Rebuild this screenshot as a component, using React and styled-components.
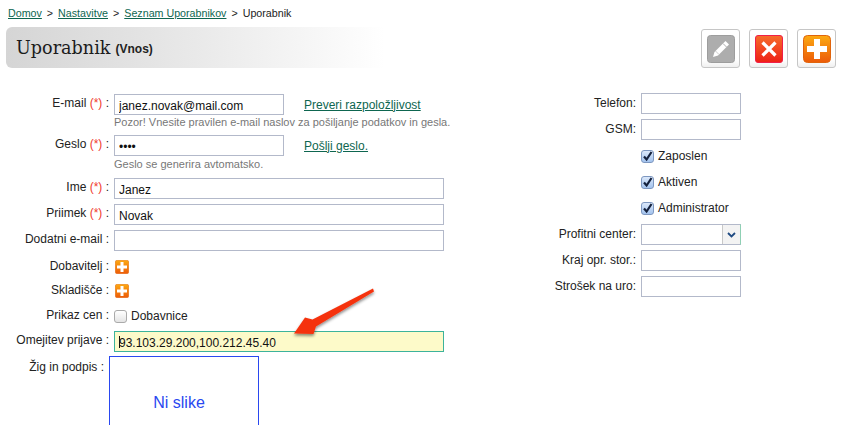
import React from 'react';
import styled, { createGlobalStyle } from 'styled-components';

const GlobalStyle = createGlobalStyle`
  html, body {
    margin: 0;
    padding: 0;
    height: 425px;
    overflow: hidden;
    background: #fff;
  }
  body {
    font-family: "Liberation Sans", Arial, sans-serif;
    font-size: 12px;
    color: #222;
  }
`;

const Page = styled.div`
  position: relative;
  width: 842px;
  height: 425px;
  overflow: hidden;
  padding: 7px 6px 0;
  box-sizing: border-box;
`;

const Breadcrumbs = styled.div`
  display: flex;
  gap: 5px;
  padding-left: 2px;
  font-size: 10.7px;
  line-height: 13px;
  height: 20px;
  color: #222;
`;

const Crumb = styled.a`
  color: #0e6650;
  text-decoration: underline;
`;

const Header = styled.div`
  display: flex;
  justify-content: space-between;
  align-items: flex-start;
  height: 41px;
  margin-bottom: 26px;
`;

const TitleBar = styled.div`
  width: 379px;
  height: 41px;
  display: flex;
  align-items: center;
  gap: 5px;
  padding-left: 10px;
  box-sizing: border-box;
  border-radius: 6px 0 0 6px;
  background: linear-gradient(90deg, #d5d5d5 0%, #e9e9e9 50%, #ffffff 100%);
`;

const Title = styled.h1`
  margin: 0;
  font-family: "DejaVu Serif", "Liberation Serif", serif;
  font-size: 17.6px;
  font-weight: 400;
  color: #1c1c1c;
`;

const TitleNote = styled.span`
  font-size: 12px;
  font-weight: 700;
  margin-top: 2px;
`;

const Actions = styled.div`
  display: flex;
  gap: 9px;
  margin-top: 2px;
`;

const ActionButton = styled.button`
  width: 39px;
  height: 39px;
  padding: 0;
  display: flex;
  align-items: center;
  justify-content: center;
  background: linear-gradient(#fff 80%, #f0f0f0);
  border: 1px solid #c6c6c6;
  border-radius: 3px;
`;

const Columns = styled.div`
  display: flex;
`;

const LeftColumn = styled.div`
  width: 438px;
  display: flex;
  flex-direction: column;
`;

const RightColumn = styled.div`
  margin-left: 95px;
  margin-top: -1px;
  display: flex;
  flex-direction: column;
`;

const Field = styled.div`
  display: grid;
  grid-template-columns: 103px 1fr;
  column-gap: 5px;
  align-items: start;
  min-height: ${p => p.$height || 21}px;
  margin-bottom: ${p => p.$gap ?? 5}px;
`;

const Label = styled.label`
  text-align: right;
  line-height: 18px;
  white-space: nowrap;
  font-size: 12px;
  color: #222;
`;

const ImageLabel = styled(Label)`
  padding: 2px 5px 0 0;
`;

const Required = styled.span`
  color: #f03a2e;
`;

const TextInput = styled.input`
  width: ${p => p.$width || 330}px;
  height: 21px;
  box-sizing: border-box;
  padding: 2px 4px 0;
  border: 1px solid ${p => (p.$focused ? '#3cb39b' : '#b3b9ca')};
  background: ${p => (p.$focused ? '#fdfac9' : '#fff')};
  font-family: "Liberation Sans", Arial, sans-serif;
  font-size: 12px;
  color: #111;
  outline: none;
  display: block;
`;

const InputRow = styled.div`
  display: flex;
  align-items: center;
  gap: 20px;
`;

const SideLink = styled.a`
  color: #0e6650;
  text-decoration: underline;
  font-size: 12px;
`;

const Hint = styled.div`
  font-size: 11px;
  line-height: 13px;
  color: #777;
  margin-top: ${p => p.$top ?? 2}px;
  white-space: nowrap;
`;

const IconRow = styled.div`
  height: 19px;
  display: flex;
  align-items: center;
  margin-left: 1px;
`;

const CheckRow = styled.div`
  display: flex;
  align-items: center;
  gap: 4px;
  height: 20px;
`;

const EmptyBox = styled.span`
  width: 11px;
  height: 11px;
  border: 1px solid #aaa;
  border-radius: 3px;
  background: linear-gradient(#fff, #e4e4e4);
  display: block;
`;

const CheckedBox = styled.span`
  width: 13px;
  height: 13px;
  box-sizing: border-box;
  border: 1px solid #7d97c0;
  border-radius: 3px;
  background: linear-gradient(#dbe8fa, #a3c3ee);
  display: flex;
  align-items: center;
  justify-content: center;
`;

const CaretWrap = styled.div`
  position: relative;
  width: 330px;
`;

const Caret = styled.span`
  position: absolute;
  left: 5px;
  top: 5px;
  width: 1px;
  height: 12px;
  background: #111;
`;

const ImageBox = styled.div`
  width: 150px;
  height: 150px;
  box-sizing: border-box;
  margin-left: -5px;
  border: 1px solid #2a48f0;
  color: #2a48f0;
  font-size: 16px;
  text-align: center;
  padding: 37px 10px 0 0;
`;

const SideField = styled.div`
  display: grid;
  grid-template-columns: 97px 100px;
  column-gap: 5px;
  align-items: start;
  height: 21px;
  margin-bottom: 5px;
`;

const SideLabel = styled(Label)`
  line-height: 16px;
  padding-top: 2px;
`;

const SideCheck = styled.div`
  display: flex;
  align-items: center;
  gap: 4px;
  height: 20px;
  margin-bottom: 6px;
  margin-left: 102px;
  margin-top: ${p => p.$top || 0}px;
`;

const SelectBox = styled.div`
  width: 100px;
  height: 21px;
  box-sizing: border-box;
  border: 1px solid #b3b9ca;
  border-right-color: #8fd0b4;
  display: flex;
  justify-content: flex-end;
`;

const SelectArrow = styled.div`
  width: 17px;
  background: #f3f3f3;
  border-left: 1px solid #c8c8c8;
  display: flex;
  align-items: center;
  justify-content: center;
`;

const Annotation = styled.svg`
  position: absolute;
  left: 0;
  top: 0;
  pointer-events: none;
  overflow: visible;
`;

const PencilIcon = () => (
  <svg width="28" height="28" viewBox="0 0 28 28">
    <rect x="0.5" y="0.5" width="27" height="27" rx="3" fill="#adadad" stroke="#9d9d9d" />
    <path d="M18.5 6l3.5 3.5L11 20.5 6 22l1.5-5z" fill="#fff" />
    <path d="M16 8.5l3.5 3.5" stroke="#adadad" strokeWidth="1" fill="none" />
    <path d="M8.5 16l3.5 3.5" stroke="#bdbdbd" strokeWidth="0.8" fill="none" />
  </svg>
);

const CloseIcon = () => (
  <svg width="28" height="28" viewBox="0 0 28 28">
    <defs>
      <linearGradient id="closeFill" x1="0" y1="0" x2="0" y2="1">
        <stop offset="0" stopColor="#f66c2a" />
        <stop offset="1" stopColor="#ee1f16" />
      </linearGradient>
    </defs>
    <rect x="0.5" y="0.5" width="27" height="27" rx="2.5" fill="url(#closeFill)" stroke="#f01f48" />
    <path d="M7.5 7.5l13 13M20.5 7.5l-13 13" stroke="#fff" strokeWidth="3.2" />
  </svg>
);

const PlusIcon = ({ id, size = 28 }) => (
  <svg width={size} height={size} viewBox="0 0 28 28">
    <defs>
      <linearGradient id={id} x1="0" y1="0" x2="0" y2="1">
        <stop offset="0" stopColor="#fcaa12" />
        <stop offset="1" stopColor="#ec5a08" />
      </linearGradient>
    </defs>
    <rect x="0.5" y="0.5" width="27" height="27" rx="4" fill={`url(#${id})`} stroke="#e0640c" />
    <path d="M11 4h6v7h7v6h-7v7h-6v-7H4v-6h7z" fill="#fff" />
  </svg>
);

const Tick = () => (
  <svg width="11" height="11" viewBox="0 0 11 11">
    <path d="M2 5.5l2.6 3L9.5 1" fill="none" stroke="#14213d" strokeWidth="2.2" />
  </svg>
);

const Chevron = () => (
  <svg width="9" height="6" viewBox="0 0 9 6">
    <path d="M1 1l3.5 3.5L8 1" fill="none" stroke="#1f4a82" strokeWidth="1.8" />
  </svg>
);

const star = <Required>(*)</Required>;

const App = () => (
  <Page>
    <GlobalStyle />
    <Breadcrumbs>
      <Crumb>Domov</Crumb><span>&gt;</span>
      <Crumb>Nastavitve</Crumb><span>&gt;</span>
      <Crumb>Seznam Uporabnikov</Crumb><span>&gt;</span>
      <span>Uporabnik</span>
    </Breadcrumbs>
    <Header>
      <TitleBar>
        <Title>Uporabnik</Title>
        <TitleNote>(Vnos)</TitleNote>
      </TitleBar>
      <Actions>
        <ActionButton><PencilIcon /></ActionButton>
        <ActionButton><CloseIcon /></ActionButton>
        <ActionButton><PlusIcon id="plusMain" /></ActionButton>
      </Actions>
    </Header>
    <Columns>
      <LeftColumn>
        <Field $gap={6}>
          <Label>E-mail {star} :</Label>
          <div>
            <InputRow>
              <TextInput $width={170} readOnly value="janez.novak@mail.com" />
              <SideLink>Preveri razpoložljivost</SideLink>
            </InputRow>
            <Hint $top={1}>Pozor! Vnesite pravilen e-mail naslov za pošiljanje podatkov in gesla.</Hint>
          </div>
        </Field>
        <Field $gap={7}>
          <Label>Geslo {star} :</Label>
          <div>
            <InputRow>
              <TextInput $width={170} type="password" readOnly value="abcd" />
              <SideLink>Pošlji geslo.</SideLink>
            </InputRow>
            <Hint>Geslo se generira avtomatsko.</Hint>
          </div>
        </Field>
        <Field>
          <Label>Ime {star} :</Label>
          <TextInput readOnly value="Janez" />
        </Field>
        <Field>
          <Label>Priimek {star} :</Label>
          <TextInput readOnly value="Novak" />
        </Field>
        <Field $gap={6}>
          <Label>Dodatni e-mail :</Label>
          <TextInput readOnly value="" />
        </Field>
        <Field $height={19} $gap={5}>
          <Label>Dobavitelj :</Label>
          <IconRow><PlusIcon id="plusSupplier" size={14} /></IconRow>
        </Field>
        <Field $height={19} $gap={6}>
          <Label>Skladišče :</Label>
          <IconRow><PlusIcon id="plusStore" size={14} /></IconRow>
        </Field>
        <Field $height={20} $gap={5}>
          <Label>Prikaz cen :</Label>
          <CheckRow><EmptyBox />Dobavnice</CheckRow>
        </Field>
        <Field $gap={4}>
          <Label>Omejitev prijave :</Label>
          <CaretWrap>
            <TextInput $focused readOnly value="93.103.29.200,100.212.45.40" />
            <Caret />
          </CaretWrap>
        </Field>
        <Field $height={150} $gap={0}>
          <ImageLabel>Žig in podpis :</ImageLabel>
          <ImageBox>Ni slike</ImageBox>
        </Field>
      </LeftColumn>
      <RightColumn>
        <SideField>
          <SideLabel>Telefon:</SideLabel>
          <TextInput $width={100} readOnly value="" />
        </SideField>
        <SideField>
          <SideLabel>GSM:</SideLabel>
          <TextInput $width={100} readOnly value="" />
        </SideField>
        <SideCheck $top={1}><CheckedBox><Tick /></CheckedBox>Zaposlen</SideCheck>
        <SideCheck><CheckedBox><Tick /></CheckedBox>Aktiven</SideCheck>
        <SideCheck><CheckedBox><Tick /></CheckedBox>Administrator</SideCheck>
        <SideField>
          <SideLabel>Profitni center:</SideLabel>
          <SelectBox><SelectArrow><Chevron /></SelectArrow></SelectBox>
        </SideField>
        <SideField>
          <SideLabel>Kraj opr. stor.:</SideLabel>
          <TextInput $width={100} readOnly value="" />
        </SideField>
        <SideField>
          <SideLabel>Strošek na uro:</SideLabel>
          <TextInput $width={100} readOnly value="" />
        </SideField>
      </RightColumn>
    </Columns>
    <Annotation width="842" height="425" viewBox="0 0 842 425">
      <defs>
        <filter id="arrowShadow" x="-20%" y="-20%" width="140%" height="140%">
          <feDropShadow dx="0" dy="2" stdDeviation="1.5" floodColor="#000" floodOpacity="0.45" />
        </filter>
      </defs>
      <polygon
        points="373,288.5 312.5,319.5 305,317.5 294,333.5 313.5,334 316,326.5 374,291.5"
        fill="#f5330f"
        filter="url(#arrowShadow)"
      />
    </Annotation>
  </Page>
);

export default App;
